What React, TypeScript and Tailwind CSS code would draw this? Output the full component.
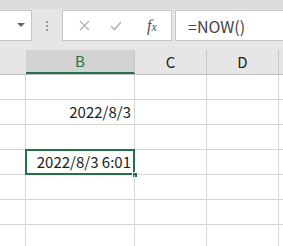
import React from "react";

const font = { fontFamily: '"Noto Sans CJK JP", "Noto Sans", sans-serif' };

function Row({ b, selected }: { b?: string; selected?: boolean }) {
  return (
    <div className="flex h-[25px]">
      <div className="w-[26px] shrink-0 border-r border-b border-[#d4d4d4]" />
      <div className="relative w-[109px] shrink-0 border-r border-b border-[#d4d4d4] flex items-center justify-end pr-[3px] text-[15px] text-[#222]">
        {b}
        {selected && (
          <>
            <div className="absolute left-[-1px] top-[-1px] w-[110px] h-[26px] border-2 border-[#217346]" />
            <div className="absolute left-[106px] top-[22px] w-[6px] h-[6px] bg-[#217346] border border-white" />
          </>
        )}
      </div>
      <div className="w-[72px] shrink-0 border-r border-b border-[#d4d4d4]" />
      <div className="w-[72px] shrink-0 border-r border-b border-[#d4d4d4]" />
      <div className="flex-1 border-b border-[#d4d4d4]" />
    </div>
  );
}

export default function App() {
  return (
    <div className="w-[283px] h-[246px] overflow-hidden bg-white" style={font}>
      <div className="h-[50px] bg-[#e6e6e6] flex flex-col">
        <div className="h-[9px] bg-[#dcdcdc]" />
        <div className="h-[1px]" />
        <div className="flex items-start">
          <div className="w-[32px] h-[31px] bg-white border border-l-0 border-[#c6c6c6] flex items-center justify-end pr-[6px]">
            <svg width="8" height="5" viewBox="0 0 8 5"><path d="M0 0H8L4 4Z" fill="#666" /></svg>
          </div>
          <div className="w-[30px] h-[31px] flex flex-col items-center justify-center gap-[2px]">
            <div className="w-[2px] h-[2px] bg-[#999]" />
            <div className="w-[2px] h-[2px] bg-[#999]" />
            <div className="w-[2px] h-[2px] bg-[#999]" />
          </div>
          <div className="w-[110px] h-[31px] bg-white border border-[#c6c6c6] flex items-center">
            <div className="w-[40px] flex justify-center pl-[2px]">
              <svg width="11" height="11" viewBox="0 0 11 11"><path d="M1 1L10 10M10 1L1 10" stroke="#b4b4b4" strokeWidth="1.4" /></svg>
            </div>
            <div className="w-[26px] flex justify-center">
              <svg width="12" height="10" viewBox="0 0 12 10"><path d="M1 5L4.5 8.5L11 1" stroke="#b4b4b4" strokeWidth="1.6" fill="none" /></svg>
            </div>
            <div className="flex-1 flex justify-center pl-[4px]">
              <span className="text-[16px] italic text-[#505050] leading-none" style={{ fontFamily: '"Liberation Serif", serif' }}>f<span className="text-[12px]">x</span></span>
            </div>
          </div>
          <div className="ml-[3px] flex-1 h-[31px] bg-white border border-r-0 border-[#c6c6c6] flex items-center pl-[12px] text-[16px] text-[#444]">
            =NOW()
          </div>
        </div>
      </div>
      <div className="flex h-[25px] bg-[#e6e6e6] border-b border-[#bfbfbf] text-[15px]">
        <div className="w-[26px] shrink-0" />
        <div className="w-[109px] shrink-0 bg-[#d2d2d2] border-r border-[#c6c6c6] border-b-2 border-b-[#217346] flex items-center justify-center text-[#217346]">B</div>
        <div className="w-[72px] shrink-0 border-r border-[#c6c6c6] flex items-center justify-center text-[#222]">C</div>
        <div className="w-[72px] shrink-0 border-r border-[#c6c6c6] flex items-center justify-center text-[#222]">D</div>
        <div className="flex-1" />
      </div>
      <Row />
      <Row b="2022/8/3" />
      <Row />
      <Row b="2022/8/3 6:01" selected />
      <Row />
      <Row />
      <Row />
    </div>
  );
}
